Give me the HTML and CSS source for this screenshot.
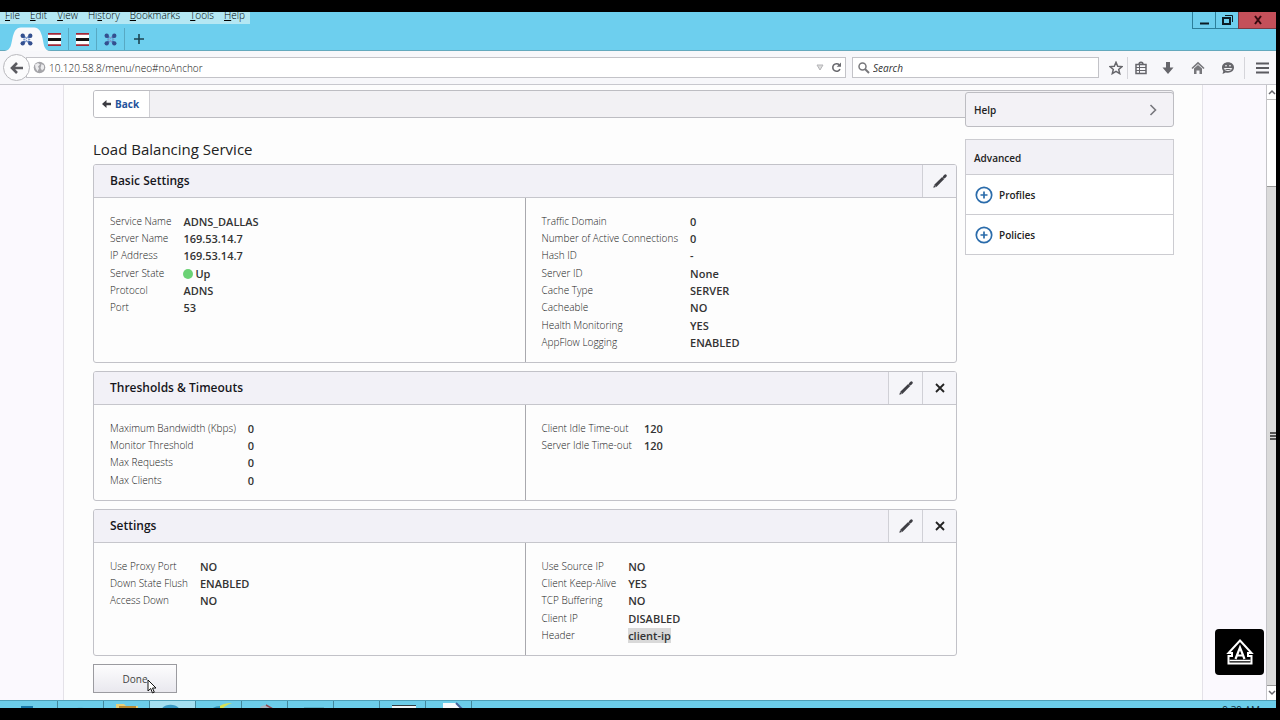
FILE: index.html
```html
<!DOCTYPE html>
<html lang="en">
<head>
    <meta charset="UTF-8">
    <meta name="viewport" content="width=device-width, initial-scale=1.0">
    <title>Load Balancing Service</title>
    <link rel="stylesheet" href="styles.css">
</head>
<body>
    <!-- Shared icons -->
    <svg class="sprite" aria-hidden="true">
        <symbol id="i-pencil" viewBox="0 0 16 16">
            <path d="M3.300 12.900 11.200 5" stroke="#3f3f45" stroke-width="2.900" fill="none"/>
            <path d="m12.200 4 1.200-1.200" stroke="#3f3f45" stroke-width="2.800" stroke-linecap="round"/>
            <path d="m1.300 14.700.8-2.700 1.900 1.900z" fill="#3f3f45"/>
        </symbol>
        <symbol id="i-close" viewBox="0 0 16 16">
            <path d="m4 4 8 8M12 4l-8 8" stroke="#222" stroke-width="1.800" fill="none"/>
        </symbol>
        <symbol id="i-plus" viewBox="0 0 18 18">
            <circle cx="9" cy="9" r="7.700" fill="#fff" stroke="#2b6cab" stroke-width="1.700"/>
            <path d="M9 5.500v7M5.500 9h7" stroke="#2b6cab" stroke-width="1.700"/>
        </symbol>
        <symbol id="i-pinwheel" viewBox="0 0 12 12">
            <path d="M1.500 1.500 4.500 4.500M10.500 1.500 7.500 4.500M1.500 10.500l3-3M10.500 10.500l-3-3" stroke="#3f6bb3" stroke-width="2"/>
            <g fill="#34508f">
                <circle cx="2.500" cy="2.500" r="2"/>
                <circle cx="9.500" cy="2.500" r="2"/>
                <circle cx="9.500" cy="9.500" r="2"/>
                <circle cx="2.500" cy="9.500" r="2"/>
            </g>
            <path d="M4.500 3.500 6 5l1.500-1.700M4.500 8.500 6 7l1.500 1.700M3 6h2M7.500 6h2" stroke="#7f98c8" fill="none"/>
        </symbol>
        <symbol id="i-stripes" viewBox="0 0 13 13">
            <path d="M0 0h13v13H0z" fill="#fff"/>
            <path d="M0 0h13v1.700H0zM0 11.300h13V13H0z" fill="#a02838"/>
            <path d="M0 5h13v3H0z" fill="#111"/>
        </symbol>
    </svg>

    <header class="titlebar">
        <div class="titlebar-left">
            <nav class="menubar">
                <button><u>F</u>ile</button>
                <button><u>E</u>dit</button>
                <button><u>V</u>iew</button>
                <button>Hi<u>s</u>tory</button>
                <button><u>B</u>ookmarks</button>
                <button><u>T</u>ools</button>
                <button><u>H</u>elp</button>
            </nav>
            <div class="tabs">
                <button class="tab tab-active" aria-label="NetScaler">
                    <svg class="tab-shape" viewBox="0 0 48 24" aria-hidden="true">
                        <path d="M0 24c9 0 8-8 10-15C12 2 14 .5 20 .5h9C35 .5 37 2 39 9c2 7 1 15 9 15z" fill="#f9f9fb"/>
                    </svg>
                    <svg class="favicon" aria-hidden="true"><use href="#i-pinwheel"/></svg>
                </button>
                <button class="tab" aria-label="Tab 2"><svg class="favicon" aria-hidden="true"><use href="#i-stripes"/></svg></button>
                <button class="tab" aria-label="Tab 3"><svg class="favicon" aria-hidden="true"><use href="#i-stripes"/></svg></button>
                <button class="tab" aria-label="Tab 4"><svg class="favicon" aria-hidden="true"><use href="#i-pinwheel"/></svg></button>
                <button class="tab tab-new" aria-label="New tab">
                    <svg width="10" height="10" aria-hidden="true"><path d="M5 0v10M0 5h10" stroke="#1c4452" stroke-width="1.600"/></svg>
                </button>
            </div>
        </div>
        <div class="window-buttons">
            <button aria-label="Minimize"><svg width="12" height="12" aria-hidden="true"><path d="M2 9.500h9" stroke="#0c1c24" stroke-width="2"/></svg></button>
            <button aria-label="Restore"><svg width="12" height="12" aria-hidden="true"><path d="M2 4h7v6H2z" stroke="#0c1c24" stroke-width="2" fill="none"/><path d="M4 1.500h7.500V8" stroke="#0c1c24" fill="none"/></svg></button>
            <button class="window-close" aria-label="Close"><svg width="10" height="10" aria-hidden="true"><path d="m2 1 6 8M8 1 2 9" stroke="#35090f" stroke-width="2"/></svg></button>
        </div>
    </header>

    <div class="toolbar">
        <button class="back-circle" aria-label="Go back">
            <svg width="14" height="12" aria-hidden="true"><path d="M7 1 2 6l5 5M2.500 6H13" stroke="#5b5b60" stroke-width="2.600" fill="none"/></svg>
        </button>
        <div class="field url-field">
            <svg width="13" height="13" viewBox="0 0 13 13" aria-hidden="true">
                <circle cx="6.500" cy="6.500" r="5.800" fill="#a5a5a9"/>
                <path d="M2 3.500 5 2l2 1.500L5 5.500l1 2-1.500 3L2.500 7zM8.500 3l2.500 1.500v3L9 9.500 7.500 7z" fill="#ececee"/>
            </svg>
            <input type="text" class="url-input" value="10.120.58.8/menu/neo#noAnchor" aria-label="Address">
            <svg width="8" height="7" aria-hidden="true"><path d="M1 1h6L4 6z" fill="#ddd" stroke="#b5b5b8"/></svg>
            <button class="plain" aria-label="Reload">
                <svg width="11" height="11" viewBox="0 0 11 11" aria-hidden="true"><path d="M8.300 2.800A3.800 3.800 0 1 0 9 7.200" stroke="#69696e" stroke-width="1.600" fill="none"/><path d="M10 .5v4.300H5.700z" fill="#69696e"/></svg>
            </button>
        </div>
        <div class="field search-field">
            <svg width="12" height="12" aria-hidden="true"><circle cx="4.500" cy="4.500" r="3.500" stroke="#77777b" stroke-width="1.500" fill="none"/><path d="m7 7 4 4" stroke="#77777b" stroke-width="2"/></svg>
            <input type="search" class="search-input" placeholder="Search" aria-label="Search">
        </div>
        <div class="toolbar-icons">
            <button class="plain" aria-label="Bookmark this page">
                <svg width="14" height="14" viewBox="0 0 14 14" aria-hidden="true"><path d="m7 1.300 1.700 3.900 4.200.4-3.200 2.800 1 4.200L7 10.400l-3.700 2.200 1-4.200L1.100 5.600l4.200-.4z" stroke="#66666b" stroke-width="1.500" fill="none"/></svg>
            </button>
            <button class="plain icon-list" aria-label="Bookmarks list">
                <svg width="14" height="14" viewBox="0 0 14 14" aria-hidden="true"><path d="M2 3.500h10v9H2zM5 3.500c0-3 4-3 4 0" stroke="#66666b" stroke-width="1.500" fill="none"/><path d="M2 6.500h10M2 9.500h10M5.500 4v8" stroke="#66666b"/></svg>
            </button>
            <button class="plain" aria-label="Downloads">
                <svg width="14" height="14" viewBox="0 0 14 14" aria-hidden="true"><path d="M5 1h4v5.500h3.500L7 13 1.500 6.500H5z" fill="#66666b"/></svg>
            </button>
            <button class="plain" aria-label="Home">
                <svg width="14" height="14" viewBox="0 0 14 14" aria-hidden="true"><path d="m1 7.500 6-5.700 6 5.700" stroke="#77777b" stroke-width="1.600" fill="none"/><path d="M3 7.500 7 4l4 3.500V13H8.500V9.500h-3V13H3z" fill="#77777b"/></svg>
            </button>
            <button class="plain" aria-label="Chat">
                <svg width="14" height="14" viewBox="0 0 14 14" aria-hidden="true"><path d="M7 1.300c3.400 0 6 2.200 6 5.200s-2.600 5.200-6 5.200c-.8 0-1.500-.1-2.200-.3L1.500 13l.8-3C1.500 9 1 7.800 1 6.500c0-3 2.600-5.200 6-5.200z" fill="#66666b"/><path d="M4 4.800h2M8 4.800h2M3.300 7.500h7.400C10 10.300 4 10.300 3.300 7.500z" stroke="#f4f4f6" fill="none"/></svg>
            </button>
            <button class="plain icon-menu" aria-label="Open menu">
                <svg width="13" height="12" aria-hidden="true"><path d="M0 1.500h13M0 6h13M0 10.500h13" stroke="#5b5b60" stroke-width="2.200"/></svg>
            </button>
        </div>
    </div>

    <div class="viewport">
        <div class="page">
            <div class="breadcrumb">
                <a href="#" class="back-link">
                    <svg width="10" height="8" aria-hidden="true"><path d="M0 4 4.500 0v2.800H9v2.400H4.500V8z" fill="#3c3c42"/></svg>
                    Back
                </a>
            </div>
            <div class="columns">
                <main class="main">
                    <h1>Load Balancing Service</h1>

                    <section class="panel">
                        <div class="panel-header">
                            <h2>Basic Settings</h2>
                            <button aria-label="Edit basic settings"><svg aria-hidden="true"><use href="#i-pencil"/></svg></button>
                        </div>
                        <div class="panel-body">
                            <div class="half">
                                <table class="details">
                                    <tr><th scope="row">Service Name</th><td>ADNS_DALLAS</td></tr>
                                    <tr><th scope="row">Server Name</th><td>169.53.14.7</td></tr>
                                    <tr><th scope="row">IP Address</th><td>169.53.14.7</td></tr>
                                    <tr><th scope="row">Server State</th><td><span class="status-dot"></span>Up</td></tr>
                                    <tr><th scope="row">Protocol</th><td>ADNS</td></tr>
                                    <tr><th scope="row">Port</th><td>53</td></tr>
                                </table>
                            </div>
                            <div class="half">
                                <table class="details">
                                    <tr><th scope="row">Traffic Domain</th><td>0</td></tr>
                                    <tr><th scope="row">Number of Active Connections</th><td>0</td></tr>
                                    <tr><th scope="row">Hash ID</th><td>-</td></tr>
                                    <tr><th scope="row">Server ID</th><td>None</td></tr>
                                    <tr><th scope="row">Cache Type</th><td>SERVER</td></tr>
                                    <tr><th scope="row">Cacheable</th><td>NO</td></tr>
                                    <tr><th scope="row">Health Monitoring</th><td>YES</td></tr>
                                    <tr><th scope="row">AppFlow Logging</th><td>ENABLED</td></tr>
                                </table>
                            </div>
                        </div>
                    </section>

                    <section class="panel">
                        <div class="panel-header">
                            <h2>Thresholds &amp; Timeouts</h2>
                            <button aria-label="Edit thresholds"><svg aria-hidden="true"><use href="#i-pencil"/></svg></button>
                            <button aria-label="Remove thresholds"><svg aria-hidden="true"><use href="#i-close"/></svg></button>
                        </div>
                        <div class="panel-body">
                            <div class="half">
                                <table class="details">
                                    <tr><th scope="row">Maximum Bandwidth (Kbps)</th><td>0</td></tr>
                                    <tr><th scope="row">Monitor Threshold</th><td>0</td></tr>
                                    <tr><th scope="row">Max Requests</th><td>0</td></tr>
                                    <tr><th scope="row">Max Clients</th><td>0</td></tr>
                                </table>
                            </div>
                            <div class="half">
                                <table class="details">
                                    <tr><th scope="row">Client Idle Time-out</th><td>120</td></tr>
                                    <tr><th scope="row">Server Idle Time-out</th><td>120</td></tr>
                                </table>
                            </div>
                        </div>
                    </section>

                    <section class="panel">
                        <div class="panel-header">
                            <h2>Settings</h2>
                            <button aria-label="Edit settings"><svg aria-hidden="true"><use href="#i-pencil"/></svg></button>
                            <button aria-label="Remove settings"><svg aria-hidden="true"><use href="#i-close"/></svg></button>
                        </div>
                        <div class="panel-body">
                            <div class="half">
                                <table class="details">
                                    <tr><th scope="row">Use Proxy Port</th><td>NO</td></tr>
                                    <tr><th scope="row">Down State Flush</th><td>ENABLED</td></tr>
                                    <tr><th scope="row">Access Down</th><td>NO</td></tr>
                                </table>
                            </div>
                            <div class="half">
                                <table class="details">
                                    <tr><th scope="row">Use Source IP</th><td>NO</td></tr>
                                    <tr><th scope="row">Client Keep-Alive</th><td>YES</td></tr>
                                    <tr><th scope="row">TCP Buffering</th><td>NO</td></tr>
                                    <tr><th scope="row">Client IP</th><td>DISABLED</td></tr>
                                    <tr><th scope="row">Header</th><td><span class="selected">client-ip</span></td></tr>
                                </table>
                            </div>
                        </div>
                    </section>

                    <button class="done">Done
                        <svg class="cursor" width="10" height="15" aria-hidden="true"><path d="M1 1v11l2.700-2.500L5.500 14l1.800-.8-1.800-4.200H9z" fill="#fff" stroke="#111"/></svg>
                    </button>
                </main>

                <aside class="sidebar">
                    <button class="help">Help
                        <svg width="8" height="12" aria-hidden="true"><path d="m1.500 1 5 5-5 5" stroke="#77777c" stroke-width="1.600" fill="none"/></svg>
                    </button>
                    <div class="advanced">
                        <h3>Advanced</h3>
                        <button><svg aria-hidden="true"><use href="#i-plus"/></svg>Profiles</button>
                        <button><svg aria-hidden="true"><use href="#i-plus"/></svg>Policies</button>
                    </div>
                </aside>
            </div>
        </div>

        <div class="scrollbar">
            <div class="scroll-arrow"><svg width="8" height="6" aria-hidden="true"><path d="m1 5 3-3 3 3" stroke="#66666c" stroke-width="1.500" fill="none"/></svg></div>
            <div class="scroll-gap"></div>
            <div class="scroll-thumb"><i></i><i></i><i></i></div>
            <div class="scroll-arrow"><svg width="8" height="6" aria-hidden="true"><path d="m1 1 3 3 3-3" stroke="#66666c" stroke-width="1.500" fill="none"/></svg></div>
        </div>

        <button class="to-top" aria-label="Back to top">
            <svg width="28" height="28" viewBox="0 0 28 28" aria-hidden="true">
                <path d="M14 2.500 25.500 15H22v3h3.500v7.500h-23V18H6v-3H2.500z" fill="none" stroke="#fff" stroke-width="2"/>
                <path d="M3.500 22.500h21" stroke="#fff" stroke-width="1.500"/>
                <path d="M9.500 21 14 9.500 18.500 21M11 17.500h6" stroke="#fff" stroke-width="2.200" fill="none"/>
            </svg>
        </button>
    </div>

    <footer class="taskbar">
        <div class="task"><svg aria-hidden="true"><path d="M21 5h12v8H21z" fill="#1878a8"/></svg></div>
        <div class="task"><svg aria-hidden="true"><path d="M14 9c4-3 12-3 18 0z" fill="#4ba6bf"/></svg></div>
        <div class="task"><svg aria-hidden="true"><path d="M12 3h8l2 2h12v8H12z" fill="#e8cf78"/><path d="M15 6h17" stroke="#b98b35" stroke-width="2"/></svg></div>
        <div class="task task-active"><svg aria-hidden="true"><path d="M11 9c3-7 16-7 19 0z" fill="#3a9ac5"/></svg></div>
        <div class="task"><svg aria-hidden="true"><path d="M18 10C22 4 30 2 36 2c-5 2-9 4-11 8z" fill="#d9e04f"/><path d="M16 9c2-2 5-3 8-3" stroke="#2f95bb" stroke-width="2" fill="none"/></svg></div>
        <div class="task"><svg aria-hidden="true"><path d="M18 6c5-3 9-2 14 3H20z" fill="#a9b6c0"/><path d="m24 4 7 4" stroke="#8f4650" stroke-width="1.500"/></svg></div>
        <div class="task"><svg aria-hidden="true"><path d="M16 6h20v3H16z" fill="#58afc6"/></svg></div>
        <div class="task"></div>
        <div class="task"><svg aria-hidden="true"><path d="M12 4h24v5H12z" fill="#eef6f8"/><path d="M12 4.500h24M14 7.500h20" stroke="#343c40"/></svg></div>
        <div class="task"><svg aria-hidden="true"><path d="M17 2h13l6 5v4H17z" fill="#f7f9fb"/><path d="m30 2 6 6" stroke="#44639c" stroke-width="2"/></svg></div>
        <div class="clock">9:39 AM</div>
    </footer>
</body>
</html>
```
FILE: styles.css
```css
* {
    box-sizing: border-box;
}
body {
    margin: 0;
    height: 100vh;
    padding: 12px 4px 12px 0;
    display: flex;
    flex-direction: column;
    background-color: #000;
    color: #222;
    font-family: "Open Sans", "Liberation Sans", sans-serif;
    font-size: 10px;
    overflow: hidden;
}
button, input {
    font-family: inherit;
    font-size: inherit;
    color: inherit;
    margin: 0;
    padding: 0;
    border: none;
    background: none;
}
button {
    cursor: pointer;
}
svg {
    display: block;
    flex: none;
}
.sprite {
    position: absolute;
    width: 0;
    height: 0;
}

/* Window title, menus and tabs */
.titlebar {
    display: flex;
    justify-content: space-between;
    align-items: flex-start;
    height: 39px;
    flex: none;
    background-color: #6dcfee;
    border-bottom: 1px solid #64a9bd;
}
.menubar {
    display: flex;
    align-items: flex-end;
    gap: 10px;
    height: 12px;
    padding: 0 5px;
    background-color: #b4e7f3;
}
.menubar button {
    flex: none;
    line-height: 18px;
    font-weight: 300;
    color: #000;
}
.tabs {
    display: flex;
    align-items: flex-end;
    height: 26px;
    padding-left: 3px;
}
.tab {
    display: flex;
    align-items: center;
    justify-content: center;
    width: 28px;
    height: 22px;
    border-right: 1px solid #58a9c3;
}
.tab-active {
    position: relative;
    width: 46px;
    margin-right: -8px;
    border: none;
}
.tab-shape {
    position: absolute;
    left: 0;
    bottom: -1px;
    width: 48px;
    height: 24px;
}
.favicon {
    position: relative;
    width: 13px;
    height: 13px;
}
.tab-new {
    border: none;
}
.window-buttons {
    display: flex;
}
.window-buttons button {
    display: flex;
    align-items: center;
    justify-content: center;
    width: 23px;
    height: 17px;
    border: 1px solid #2c7f9a;
    border-width: 0 0 1px 1px;
}
.window-buttons .window-close {
    width: 38px;
    background-color: #c4505a;
    border-color: #7c3a42;
}

/* Address and search */
.toolbar {
    display: flex;
    align-items: center;
    height: 34px;
    flex: none;
    padding: 0 5px 0 3px;
    background-color: #f7f7fa;
    border-bottom: 1px solid #c8c8ce;
}
.back-circle {
    position: relative;
    display: flex;
    align-items: center;
    justify-content: center;
    width: 27px;
    height: 27px;
    flex: none;
    border: 1px solid #b9b9bd;
    border-radius: 50%;
    background-color: #fbfbfc;
}
.field {
    display: flex;
    align-items: center;
    height: 21px;
    background-color: #fff;
    border: 1px solid #c3c3c8;
}
.field input {
    flex: 1;
    min-width: 0;
    height: 19px;
    outline: none;
}
.url-field {
    flex: 1;
    gap: 3px;
    margin: 0 6px 0 -4px;
    padding: 0 3px 0 6px;
}
.url-input {
    font-weight: 300;
    color: #111;
}
.url-field .plain {
    margin-left: 4px;
}
.search-field {
    width: 247px;
    gap: 3px;
    padding: 0 5px;
}
.search-input::placeholder {
    color: #333;
    font-style: italic;
    opacity: 1;
}
.toolbar-icons {
    display: flex;
    align-items: center;
    padding-left: 6px;
}
.plain {
    display: flex;
    align-items: center;
    justify-content: center;
}
.toolbar-icons .plain {
    width: 30px;
    height: 22px;
}
.toolbar-icons .plain:first-child {
    width: 22px;
}
.toolbar-icons .icon-menu {
    width: 27px;
    margin-left: 1px;
    padding-left: 8px;
    border-left: 1px solid #d5d5da;
}
.toolbar-icons .icon-list {
    border-left: 1px solid #d5d5da;
    width: 26px;
}

/* Page */
.viewport {
    position: relative;
    display: flex;
    flex: 1;
    min-height: 0;
    overflow: hidden;
    background-color: #fbf9fe;
}
.page {
    flex: 1;
    margin: 0 63px;
    padding: 5px 28px 0 29px;
    background-color: #fdfdfd;
    border: 1px solid #e4e2e8;
    border-width: 0 1px;
}
.breadcrumb {
    height: 28px;
    display: flex;
    background-color: #f2f1f4;
    border: 1px solid #bdbdc2;
    border-radius: 3px;
    overflow: hidden;
}
.back-link {
    display: flex;
    align-items: center;
    gap: 3px;
    width: 56px;
    padding-left: 8px;
    background-color: #fff;
    border-right: 1px solid #cfcfd4;
    color: #23539b;
    font-weight: 700;
    text-decoration: none;
}
.columns {
    display: flex;
    align-items: flex-start;
    gap: 8px;
}
.main {
    flex: 1;
}
h1 {
    margin: 0;
    padding: 21px 0 5px;
    font-size: 15px;
    line-height: 20px;
    font-weight: 400;
}
.panel {
    margin-bottom: 8px;
    border: 1px solid #c2c2c8;
    border-radius: 3px;
    background-color: #fdfdfd;
    overflow: hidden;
}
.panel-header {
    display: flex;
    height: 33px;
    background-color: #f2f1f7;
    border-bottom: 1px solid #c6c6cc;
}
.panel-header h2 {
    flex: 1;
    margin: 0;
    padding-left: 16px;
    font-size: 12px;
    line-height: 32px;
    font-weight: 600;
    color: #16161c;
}
.panel-header button {
    display: flex;
    align-items: center;
    justify-content: center;
    width: 34px;
    background-color: #f5f5f9;
    border-left: 1px solid #d0d0d6;
}
.panel-header svg {
    width: 16px;
    height: 16px;
}
.panel-body {
    display: flex;
}
.half {
    flex: 1;
    padding: 15px 16px 11px;
}
.half + .half {
    border-left: 1px solid #a9a9ae;
}
.details {
    border-collapse: collapse;
}
.details th, .details td {
    padding: 0;
    line-height: 17px;
    text-align: left;
    vertical-align: top;
}
/* every third row is a pixel taller */
.details tr:nth-child(3n) > * {
    padding-bottom: 1px;
}
.details th {
    padding-right: 12px;
    font-weight: 300;
    color: #222;
    white-space: nowrap;
}
.details td {
    font-size: 11px;
    font-weight: 600;
    color: #333;
}
.status-dot {
    display: inline-block;
    width: 10px;
    height: 10px;
    margin-right: 2px;
    border-radius: 50%;
    background-color: #6bd275;
    vertical-align: -1px;
}
.selected {
    background-color: #d9d9d9;
}
.done {
    position: relative;
    display: block;
    width: 84px;
    height: 29px;
    border: 1px solid #9b9ba0;
    background: linear-gradient(#fdfdfe, #e9e8ee);
    font-weight: 400;
    color: #444;
}
.cursor {
    position: absolute;
    left: 53px;
    top: 14px;
}

/* Right column */
.sidebar {
    position: relative;
    width: 209px;
    margin-top: -26px;
}
.help {
    display: flex;
    align-items: center;
    justify-content: space-between;
    width: 100%;
    height: 35px;
    padding: 1px 16px 0 8px;
    background-color: #f3f2f6;
    border: 1px solid #bdbdc2;
    border-radius: 3px;
    font-weight: 600;
}
.advanced {
    margin-top: 12px;
    border: 1px solid #ccccd1;
    background-color: #fff;
}
.advanced h3 {
    margin: 0;
    padding: 2px 8px 0;
    font-size: 10px;
    line-height: 32px;
    font-weight: 600;
    background-color: #f2f1f6;
}
.advanced button {
    display: flex;
    align-items: center;
    gap: 6px;
    width: 100%;
    height: 40px;
    padding-left: 9px;
    border-top: 1px solid #ccccd1;
    font-weight: 600;
}
.advanced svg {
    width: 18px;
    height: 18px;
}

.scrollbar {
    display: flex;
    flex-direction: column;
    width: 10px;
    flex: none;
    border-left: 1px solid #c4c4c8;
    background-color: #fff;
}
.scroll-arrow {
    display: flex;
    align-items: center;
    justify-content: center;
    height: 14px;
    background-color: #fff;
}
.scroll-gap {
    flex: 86;
    border-top: 1px solid #bbb;
}
.scroll-thumb {
    flex: 501;
    display: flex;
    flex-direction: column;
    align-items: flex-end;
    justify-content: center;
    gap: 1px;
    background-color: #dadada;
    border: 1px solid #999;
    border-width: 1px 0;
}
.scroll-thumb i {
    width: 6px;
    height: 2px;
    background-color: #555;
}
.to-top {
    position: absolute;
    right: 12px;
    bottom: 25px;
    display: flex;
    align-items: center;
    justify-content: center;
    width: 49px;
    height: 46px;
    border-radius: 4px;
    background-color: #000;
}

/* Only the upper edge of the taskbar is visible */
.taskbar {
    display: flex;
    height: 8px;
    flex: none;
    overflow: hidden;
    background-color: #6ccde9;
    border-top: 1px solid #4e9fb7;
}
.task {
    width: 46px;
    flex: none;
    border-right: 1px solid #43889c;
}
.task:first-child {
    width: 58px;
}
.task svg {
    width: 46px;
    height: 14px;
}
.task-active {
    background-color: #a5dff0;
}
.clock {
    margin-left: auto;
    padding: 2px 16px 0 0;
    line-height: 14px;
    color: #10303c;
}
```
